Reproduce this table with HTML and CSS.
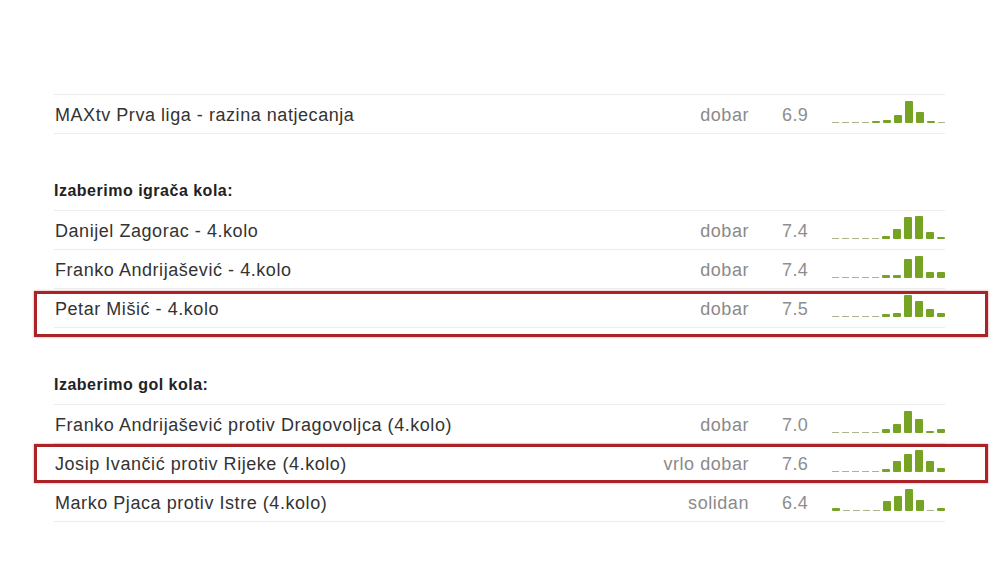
FILE: index.html
```html
<!DOCTYPE html>
<html lang="hr">
<head>
<meta charset="utf-8">
<link rel="stylesheet" href="styles.css">
</head>
<body>
<div class="page">
  <ul class="list">
    <li class="row"><span class="name">MAXtv Prva liga - razina natjecanja</span><span class="grade">dobar</span><span class="score">6.9</span>
      <span class="bars"><i class="d"></i><i class="d"></i><i class="d"></i><i class="d"></i><i style="height:2px"></i><i style="height:3px"></i><i style="height:8px"></i><i style="height:22px"></i><i style="height:11px"></i><i style="height:2px"></i><i class="d"></i></span></li>
  </ul>

  <h3 class="heading">Izaberimo igrača kola:</h3>
  <ul class="list">
    <li class="row"><span class="name">Danijel Zagorac - 4.kolo</span><span class="grade">dobar</span><span class="score">7.4</span>
      <span class="bars"><i class="d"></i><i class="d"></i><i class="d"></i><i class="d"></i><i class="d"></i><i style="height:3px"></i><i style="height:10px"></i><i style="height:22px"></i><i style="height:23px"></i><i style="height:7px"></i><i style="height:2px"></i></span></li>
    <li class="row"><span class="name">Franko Andrijašević - 4.kolo</span><span class="grade">dobar</span><span class="score">7.4</span>
      <span class="bars"><i class="d"></i><i class="d"></i><i class="d"></i><i class="d"></i><i class="d"></i><i style="height:3px"></i><i style="height:3px"></i><i style="height:19px"></i><i style="height:22px"></i><i style="height:6px"></i><i style="height:6px"></i></span></li>
    <li class="row"><span class="name">Petar Mišić - 4.kolo</span><span class="grade">dobar</span><span class="score">7.5</span>
      <span class="bars"><i class="d"></i><i class="d"></i><i class="d"></i><i class="d"></i><i class="d"></i><i style="height:3px"></i><i style="height:4px"></i><i style="height:22px"></i><i style="height:16px"></i><i style="height:8px"></i><i style="height:4px"></i></span></li>
  </ul>

  <h3 class="heading">Izaberimo gol kola:</h3>
  <ul class="list">
    <li class="row"><span class="name">Franko Andrijašević protiv Dragovoljca (4.kolo)</span><span class="grade">dobar</span><span class="score">7.0</span>
      <span class="bars"><i class="d"></i><i class="d"></i><i class="d"></i><i class="d"></i><i class="d"></i><i style="height:4px"></i><i style="height:9px"></i><i style="height:22px"></i><i style="height:14px"></i><i style="height:2px"></i><i style="height:4px"></i></span></li>
    <li class="row"><span class="name">Josip Ivančić protiv Rijeke (4.kolo)</span><span class="grade">vrlo dobar</span><span class="score">7.6</span>
      <span class="bars"><i class="d"></i><i class="d"></i><i class="d"></i><i class="d"></i><i class="d"></i><i style="height:3px"></i><i style="height:11px"></i><i style="height:18px"></i><i style="height:22px"></i><i style="height:11px"></i><i style="height:4px"></i></span></li>
    <li class="row"><span class="name">Marko Pjaca protiv Istre (4.kolo)</span><span class="grade">solidan</span><span class="score">6.4</span>
      <span class="bars"><i style="height:3px"></i><i class="d"></i><i class="d"></i><i class="d"></i><i class="d"></i><i style="height:10px"></i><i style="height:15px"></i><i style="height:22px"></i><i style="height:11px"></i><i class="d"></i><i style="height:3px"></i></span></li>
  </ul>

  <div class="mark mark-1"></div>
  <div class="mark mark-2"></div>
</div>
</body>
</html>
```

FILE: styles.css
```css
html, body {
  margin: 0;
  padding: 0;
  background: #fff;
}
body {
  font-family: "Liberation Sans", Arial, sans-serif;
  color: #333;
}
.page {
  position: relative;
  width: 891px;
  margin-left: 54px;
  padding-top: 94px;
}
.list {
  list-style: none;
  margin: 0;
  padding: 0;
  border-top: 1px solid #ececec;
}
.row {
  display: flex;
  align-items: center;
  height: 38px;
  border-bottom: 1px solid #ececec;
}
.name,
.grade,
.score {
  padding-top: 2px;
}
.name {
  flex: 1;
  font-size: 18px;
  letter-spacing: 0.55px;
  color: #333;
  padding-left: 1px;
}
.grade {
  font-size: 18px;
  letter-spacing: 0.55px;
  color: #8a8a8a;
  text-align: right;
}
.score {
  width: 50px;
  margin-left: 33px;
  font-size: 18px;
  letter-spacing: 0.4px;
  color: #8e8e8e;
}
.bars {
  width: 113px;
  height: 38px;
  box-sizing: border-box;
  padding-bottom: 10px;
  display: flex;
  align-items: flex-end;
  justify-content: space-between;
}
.bars i {
  display: block;
  width: 8px;
  background: #76a323;
  border-radius: 1px;
}
.bars i.d {
  width: 7px;
  height: 1px;
  background: #a9b58c;
  border-radius: 0;
}
.heading {
  margin: 47px 0 9px;
  font-size: 16px;
  line-height: 20px;
  font-weight: bold;
  color: #222;
  letter-spacing: 0.5px;
}
.mark {
  position: absolute;
  left: -20px;
  width: 948px;
  border: 3px solid #aa2327;
  box-shadow: 0 0 2px rgba(170, 35, 39, 0.5);
}
.mark-1 {
  top: 291px;
  height: 40px;
}
.mark-2 {
  top: 444px;
  height: 33px;
}
```
